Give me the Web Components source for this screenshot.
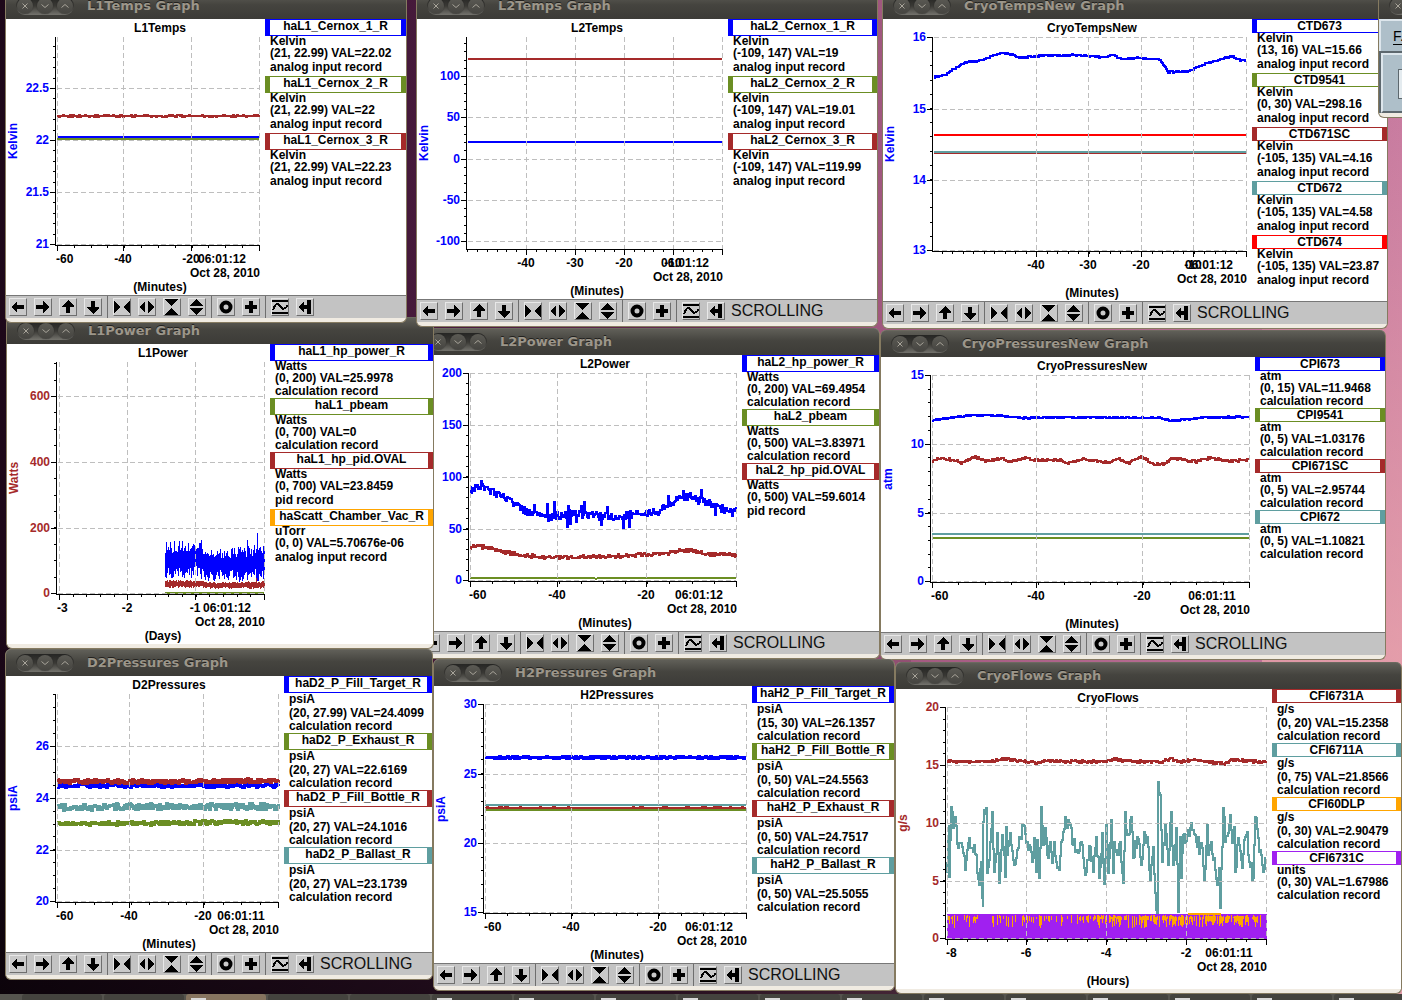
<!DOCTYPE html>
<html lang="en">
<head>
<meta charset="utf-8">
<title>StripTool graphs</title>
<style>
html, body { margin: 0; height: 100%; }
body { overflow: hidden; }
</style>
</head>
<body>
<control-desktop></control-desktop>
<script>
const COLORS = { blue: '#0000ff', green: '#6b8e23', brown: '#a52a2a', teal: '#5f9ea0', orange: '#ffa500', purple: '#a020f0', red: '#ff0000' };

/* Every window: place on the desktop, axes, traces and legend. Chart numbers are px inside the client area. */
const WINDOWS = [
  { name: 'L1Power', x: 7, y: 317, w: 426, h: 300, legendW: 163, bar: 0, unit: 'Watts', axis: 'brown', xTitle: '(Days)', time: '06:01:12',
    ys: [['600', 52], ['400', 118], ['200', 184], ['0', 249]], yDiv: 4, xs: [['-3', 52], ['-2', 120], ['-1', 188], ['', 257]], xDiv: 5,
    traces: [
      { c: 'green', w: 2, pts: [[158, 249], [257, 249]] },
      { c: 'blue', band: [[158, 203, 229], [190, 203, 228], [200, 210, 232], [225, 209, 232], [257, 206, 231]], amp: 12, spikes: [[250, 189], [240, 196], [194, 196], [175, 197]] },
      { c: 'brown', band: [[158, 237, 243], [195, 237, 243], [205, 239, 244], [257, 238, 244]], amp: 2, spikes: [[249, 234]] }],
    legend: [['haL1_hp_power_R', 'blue', 'Watts', '(0, 200) VAL=25.9978', 'calculation record'], ['haL1_pbeam', 'green', 'Watts', '(0, 700) VAL=0', 'calculation record'],
      ['haL1_hp_pid.OVAL', 'brown', 'Watts', '(0, 700) VAL=23.8459', 'pid record'], ['haScatt_Chamber_Vac_R', 'orange', 'uTorr', '(0, 0) VAL=5.70676e-06', 'analog input record']] },
  { name: 'L2Power', x: 419, y: 328, w: 460, h: 276, legendW: 137, bar: 1, unit: 'Watts', axis: 'blue', xTitle: '(Minutes)', time: '06:01:12',
    ys: [['200', 18], ['150', 70], ['100', 122], ['50', 174], ['0', 225]], yDiv: 5, xs: [['-60', 51], ['-40', 138], ['-20', 227], ['', 317]], xDiv: 4,
    traces: [
      { c: 'green', w: 2, pts: [[51, 223], [175, 223], [177, 224], [179, 223], [317, 223]] },
      { c: 'brown', w: 2, amp: 1.8, pts: [[51, 192], [66, 192], [84, 197], [104, 200], [128, 203], [198, 201], [244, 199], [258, 196], [271, 195], [288, 199], [317, 200]] },
      { c: 'blue', w: 2, amp: 4, spike: 13, pts: [[51, 135], [66, 132], [79, 140], [96, 148], [108, 158], [128, 162], [151, 159], [198, 162], [224, 158], [241, 156], [251, 148], [268, 141], [288, 147], [304, 154], [313, 158], [317, 152]] }],
    legend: [['haL2_hp_power_R', 'blue', 'Watts', '(0, 200) VAL=69.4954', 'calculation record'], ['haL2_pbeam', 'green', 'Watts', '(0, 500) VAL=3.83971', 'calculation record'],
      ['haL2_hp_pid.OVAL', 'brown', 'Watts', '(0, 500) VAL=59.6014', 'pid record']] },
  { name: 'CryoPressuresNew', x: 881, y: 330, w: 504, h: 275, legendW: 130, bar: 1, unit: 'atm', axis: 'blue', xTitle: '(Minutes)', time: '06:01:11',
    ys: [['15', 18], ['10', 87], ['5', 156], ['0', 224]], yDiv: 5, xs: [['-60', 51], ['-40', 155], ['-20', 261], ['', 368]], xDiv: 4,
    traces: [
      { c: 'green', w: 2, pts: [[51, 181], [368, 181]] },
      { c: 'teal', w: 2, pts: [[51, 177], [368, 177]] },
      { c: 'brown', w: 2, amp: 1.2, pts: [[51, 105], [56, 101], [73, 103], [80, 106], [94, 100], [105, 104], [121, 101], [128, 105], [141, 101], [155, 103], [179, 103], [187, 106], [202, 102], [226, 105], [239, 102], [247, 106], [260, 99], [271, 107], [283, 107], [291, 101], [315, 105], [327, 101], [349, 104], [368, 103]] },
      { c: 'blue', w: 2, amp: .7, pts: [[51, 63], [75, 60], [91, 58], [122, 59], [142, 61], [176, 60], [280, 61], [290, 64], [317, 61], [344, 60], [368, 60]] }],
    legend: [['CPI673', 'blue', 'atm', '(0, 15) VAL=11.9468', 'calculation record'], ['CPI9541', 'green', 'atm', '(0, 5) VAL=1.03176', 'calculation record'],
      ['CPI671SC', 'brown', 'atm', '(0, 5) VAL=2.95744', 'calculation record'], ['CPI672', 'teal', 'atm', '(0, 5) VAL=1.10821', 'calculation record']] },
  { name: 'L1Temps', x: 6, y: -8, w: 400, h: 276, legendW: 141, bar: 2, unit: 'Kelvin', axis: 'blue', xTitle: '(Minutes)', time: '06:01:12',
    ys: [['22.5', 69], ['22', 121], ['21.5', 173], ['21', 225]], yDiv: 5, xs: [['-60', 51], ['-40', 117], ['-20', 185], ['', 253]], xDiv: 4,
    traces: [
      { c: 'green', w: 2, amp: .5, pts: [[51, 120], [253, 120]] },
      { c: 'blue', w: 2, pts: [[51, 118], [253, 118]] },
      { c: 'brown', w: 2, amp: .8, pts: [[51, 97], [253, 97]] }],
    legend: [['haL1_Cernox_1_R', 'blue', 'Kelvin', '(21, 22.99) VAL=22.02', 'analog input record'], ['haL1_Cernox_2_R', 'green', 'Kelvin', '(21, 22.99) VAL=22', 'analog input record'],
      ['haL1_Cernox_3_R', 'brown', 'Kelvin', '(21, 22.99) VAL=22.23', 'analog input record']] },
  { name: 'L2Temps', x: 417, y: -8, w: 460, h: 280, legendW: 149, bar: 1, unit: 'Kelvin', axis: 'blue', xTitle: '(Minutes)', time: '06:01:12',
    ys: [['100', 57], ['50', 98], ['0', 140], ['-50', 181], ['-100', 222]], yDiv: 5, xs: [['-40', 109], ['-30', 158], ['-20', 207], ['-10', 256], ['', 305]], xDiv: 5,
    traces: [{ c: 'brown', w: 2, pts: [[51, 40], [305, 40]] }, { c: 'blue', w: 2, pts: [[51, 123], [305, 123]] }],
    legend: [['haL2_Cernox_1_R', 'blue', 'Kelvin', '(-109, 147) VAL=19', 'analog input record'], ['haL2_Cernox_2_R', 'green', 'Kelvin', '(-109, 147) VAL=19.01', 'analog input record'],
      ['haL2_Cernox_3_R', 'brown', 'Kelvin', '(-109, 147) VAL=119.99', 'analog input record']] },
  { name: 'CryoTempsNew', x: 883, y: -8, w: 504, h: 282, legendW: 135, bar: 1, unit: 'Kelvin', axis: 'blue', xTitle: '(Minutes)', time: '06:01:12',
    ys: [['16', 18], ['15', 90], ['14', 161], ['13', 231]], yDiv: 5, xs: [['-40', 153], ['-30', 205], ['-20', 258], ['-10', 310], ['', 363]], xDiv: 5,
    traces: [
      { c: 'brown', w: 2, pts: [[51, 134], [363, 134]] }, { c: 'teal', w: 2, pts: [[51, 133], [363, 133]] }, { c: 'red', w: 2, pts: [[51, 116], [363, 116]] },
      { c: 'blue', w: 2, amp: .8, pts: [[51, 58], [62, 56], [69, 51], [83, 43], [100, 41], [108, 37], [120, 34], [131, 36], [137, 39], [153, 37], [190, 36], [219, 38], [229, 36], [239, 40], [254, 39], [276, 40], [285, 53], [306, 52], [321, 45], [335, 41], [349, 37], [357, 41], [363, 42]] }],
    legend: [['CTD673', 'blue', 'Kelvin', '(13, 16) VAL=15.66', 'analog input record'], ['CTD9541', 'green', 'Kelvin', '(0, 30) VAL=298.16', 'analog input record'],
      ['CTD671SC', 'brown', 'Kelvin', '(-105, 135) VAL=4.16', 'analog input record'], ['CTD672', 'teal', 'Kelvin', '(-105, 135) VAL=4.58', 'analog input record'],
      ['CTD674', 'red', 'Kelvin', '(-105, 135) VAL=23.87', 'analog input record']] },
  { name: 'D2Pressures', x: 6, y: 649, w: 426, h: 276, legendW: 148, bar: 1, unit: 'psiA', axis: 'blue', xTitle: '(Minutes)', time: '06:01:11',
    ys: [['26', 70], ['24', 122], ['22', 174], ['20', 225]], yDiv: 4, xs: [['-60', 51], ['-40', 123], ['-20', 197], ['', 272]], xDiv: 4,
    traces: [
      { c: 'green', w: 3, amp: 1.7, pts: [[51, 147], [150, 147], [190, 146], [272, 146]] },
      { c: 'teal', w: 3, amp: 3, pts: [[51, 131], [150, 130], [272, 130]] },
      { c: 'blue', w: 3, amp: 1.9, pts: [[51, 109], [272, 109]] },
      { c: 'brown', w: 3, amp: 2, pts: [[51, 105], [150, 105], [272, 104]] }],
    legend: [['haD2_P_Fill_Target_R', 'blue', 'psiA', '(20, 27.99) VAL=24.4099', 'calculation record'], ['haD2_P_Exhaust_R', 'green', 'psiA', '(20, 27) VAL=22.6169', 'calculation record'],
      ['haD2_P_Fill_Bottle_R', 'brown', 'psiA', '(20, 27) VAL=24.1016', 'calculation record'], ['haD2_P_Ballast_R', 'teal', 'psiA', '(20, 27) VAL=23.1739', 'calculation record']] },
  { name: 'H2Pressures', x: 434, y: 659, w: 460, h: 277, legendW: 142, bar: 1, unit: 'psiA', axis: 'blue', xTitle: '(Minutes)', time: '06:01:12',
    ys: [['30', 18], ['25', 88], ['20', 157], ['15', 226]], yDiv: 5, xs: [['-60', 51], ['-40', 137], ['-20', 224], ['', 312]], xDiv: 4,
    traces: [
      { c: 'brown', w: 2, amp: .6, pts: [[51, 122], [312, 122]] }, { c: 'green', w: 2, pts: [[51, 124], [312, 124]] },
      { c: 'teal', w: 2, amp: .3, pts: [[51, 119], [312, 119]] }, { c: 'blue', w: 3, amp: .9, pts: [[51, 71], [312, 71]] }],
    legend: [['haH2_P_Fill_Target_R', 'blue', 'psiA', '(15, 30) VAL=26.1357', 'calculation record'], ['haH2_P_Fill_Bottle_R', 'green', 'psiA', '(0, 50) VAL=24.5563', 'calculation record'],
      ['haH2_P_Exhaust_R', 'brown', 'psiA', '(0, 50) VAL=24.7517', 'calculation record'], ['haH2_P_Ballast_R', 'teal', 'psiA', '(0, 50) VAL=25.5055', 'calculation record']] },
  { name: 'CryoFlows', x: 896, y: 662, w: 505, h: 300, legendW: 129, bar: 0, unit: 'g/s', axis: 'brown', xTitle: '(Hours)', time: '06:01:11',
    ys: [['20', 18], ['15', 76], ['10', 134], ['5', 192], ['0', 249]], yDiv: 5, xs: [['-8', 51], ['-6', 130], ['-4', 210], ['-2', 290], ['', 370]], xDiv: 4,
    traces: [
      { c: 'brown', w: 2, amp: 1.4, pts: [[51, 72], [75, 73], [95, 72], [105, 70], [115, 71], [140, 74], [150, 72], [210, 73], [218, 70], [230, 72], [265, 73], [275, 70], [285, 73], [297, 70], [305, 72], [328, 75], [335, 71], [370, 73]] },
      { c: 'teal', w: 2, amp: 8, scale: 3, pts: [[169, 650], [176, 510], [178, 665], [183, 457], [188, 520], [195, 487], [205, 580], [215, 575], [225, 645], [238, 550], [250, 590], [258, 600], [262, 655], [268, 690], [272, 620], [275, 730], [278, 757], [280, 500], [287, 460], [292, 655], [300, 560], [306, 470], [313, 650], [322, 535], [327, 685], [335, 540], [345, 665], [347, 517], [352, 600], [360, 535], [372, 630], [383, 580], [390, 545], [400, 510], [410, 560], [420, 575], [430, 610], [433, 550], [438, 650], [442, 555], [447, 668], [453, 457], [458, 570], [466, 520], [472, 600], [480, 560], [487, 625], [492, 560], [500, 640], [506, 645], [512, 560], [520, 530], [528, 500], [540, 510], [550, 570], [560, 585], [575, 570], [585, 660], [600, 575], [610, 650], [618, 545], [626, 670], [635, 535], [642, 688], [648, 510], [655, 655], [662, 495], [668, 655], [672, 560], [680, 600], [690, 560], [698, 683], [704, 470], [710, 540], [722, 487], [730, 610], [740, 545], [752, 630], [762, 530], [770, 545], [780, 675], [788, 575], [797, 765], [800, 775], [805, 380], [810, 420], [815, 620], [825, 510], [833, 630], [842, 470], [848, 630], [857, 520], [863, 770], [870, 545], [874, 670], [880, 540], [890, 540], [904, 505], [918, 560], [930, 575], [937, 580], [943, 675], [950, 510], [955, 600], [962, 560], [972, 610], [982, 690], [987, 640], [991, 760], [998, 460], [1005, 560], [1020, 480], [1026, 565], [1033, 515], [1035, 650], [1043, 550], [1055, 640], [1062, 555], [1070, 530], [1078, 620], [1088, 670], [1095, 487], [1103, 550], [1112, 600], [1120, 650], [1128, 610]] },
      { c: 'purple', band: [[51, 225, 250], [370, 225, 250]], amp: 0 },
      { c: 'orange', streaks: [[52, 62, .5], [68, 82, .6], [94, 130, .4], [130, 190, .45], [190, 262, .7], [262, 366, .75]], top: 226 },
      { c: 'orange', w: 2, pts: [[292, 225], [325, 225]] }],
    legend: [['CFI6731A', 'brown', 'g/s', '(0, 20) VAL=15.2358', 'calculation record'], ['CFI6711A', 'teal', 'g/s', '(0, 75) VAL=21.8566', 'calculation record'],
      ['CFI60DLP', 'orange', 'g/s', '(0, 30) VAL=2.90479', 'calculation record'], ['CFI6731C', 'purple', 'units', '(0, 30) VAL=1.67986', 'calculation record']] }
];

function define(name, html, setup) {
  const template = document.createElement('template');
  template.innerHTML = html;
  customElements.define(name, class extends HTMLElement {
    connectedCallback() {
      if (this.shadowRoot) return;
      this.attachShadow({ mode: 'open' }).append(template.content.cloneNode(true));
      if (setup) setup.call(this, this.shadowRoot);
    }
  });
}

function randomSource(seed) {
  return () => { seed = (seed * 1664525 + 1013904223) >>> 0; return seed / 4294967296; };
}

/* Path of one trace: vertical streaks, a filled noise band, or a stepped noisy line */
function tracePath(t, rnd) {
  const at = (pts, x, k = 1) => {
    let i = 1;
    while (i < pts.length - 1 && pts[i][0] < x) i++;
    const a = pts[i - 1], b = pts[i];
    return a[k] + (b[k] - a[k]) * (x - a[0]) / (b[0] - a[0]);
  };
  let d = '';
  if (t.streaks) {
    for (const [from, to, p] of t.streaks)
      for (let x = from; x < to; x++) if (rnd() < p) d += `M${x + .5} ${t.top + Math.round(rnd() * 2)}V${t.top + 3 + Math.round(rnd() * 10)}`;
    return d;
  }
  if (t.band) {
    const end = t.band[t.band.length - 1][0];
    for (let x = t.band[0][0]; x <= end; x++) {
      const s = (t.spikes || []).find(s => s[0] === x);
      const y1 = s ? s[1] : at(t.band, x, 1) - (rnd() - .5) * t.amp;
      d += `M${x + .5} ${Math.round(y1)}V${Math.round(at(t.band, x, 2) + (rnd() - .5) * t.amp)}`;
    }
    return d;
  }
  if (t.scale) {
    let [px, py] = [0, 0];
    t.pts.forEach(([zx, zy], i) => {
      const x = Math.round(zx / t.scale - 6), y = Math.round(zy / t.scale - 34);
      if (!i) d = `M${x} ${y}`;
      else {
        for (let sx = px + 1; sx < x; sx++) d += `H${sx}V${Math.round(py + (y - py) * (sx - px) / (x - px) + (rnd() - .5) * 2 * t.amp)}`;
        d += `H${x}V${y}`;
      }
      [px, py] = [x, y];
    });
    return d;
  }
  const pts = t.pts;
  if (!t.amp) return 'M' + pts.map(p => p.join(' ')).join('L');
  const start = pts[0][0], end = pts[pts.length - 1][0];
  for (let x = start; x <= end; x++) {
    let y = at(pts, x) + (rnd() - .5) * 2 * t.amp;
    if (t.spike && rnd() < .15) y += (rnd() < .55 ? -1 : 1) * t.spike * (.3 + rnd() * .7);
    y = Math.round(y);
    d += d ? `H${x}V${y}` : `M${x} ${y}`;
  }
  return d;
}

define('strip-chart', `<style>
:host { display: block; min-width: 0; }
svg { display: block; overflow: visible; }
text { font: bold 12px "Liberation Sans", Arial, sans-serif; }
.mid { text-anchor: middle; } .end { text-anchor: end; }
path { fill: none; shape-rendering: crispEdges; }
</style><svg></svg>`, function (root) {
  const c = this.config, svg = root.querySelector('svg');
  const W = c.w - c.legendW, H = c.h, L = 50, T = 18, B = H - 50, R = c.xs[c.xs.length - 1][1];
  const rnd = randomSource(c.name.length * 977 + c.h), color = COLORS[c.axis], mid = Math.round((L + R) / 2) + 2;
  let grid = '', tx = `M${L} ${B + .5}H${R + 1}`, ty = `M${L - .5} ${T}V${B + 1}`, out = '';
  for (const [, y] of c.ys) { grid += `M${L + 1} ${y + .5}H${R}`; ty += `M${L - 6} ${y + .5}H${L}`; }
  for (const [, x] of c.xs) { grid += `M${x + .5} ${T}V${B}`; tx += `M${x + .5} ${B}v6`; }
  const n = c.ys.length, dy = (c.ys[n - 1][1] - c.ys[0][1]) / (n - 1) / c.yDiv;
  for (let y = c.ys[0][1]; y > T; y -= dy) ty += `M${L - 3} ${Math.round(y) + .5}H${L}`;
  for (let y = c.ys[0][1]; y < B; y += dy) ty += `M${L - 3} ${Math.round(y) + .5}H${L}`;
  const m = c.xs.length, dx = (R - c.xs[0][1]) / (m - 1) / c.xDiv;
  for (let x = R; x > L; x -= dx) tx += `M${Math.round(x) + .5} ${B}v3`;
  for (const t of c.traces) out += `<path d="${tracePath(t, rnd)}" stroke="${COLORS[t.c]}" stroke-width="${t.w || 1}"/>`;
  out += `<path d="${grid}" stroke="#bebebe" stroke-dasharray="5 3"/><path d="${tx}${ty}" stroke="#000"/>`;
  out += `<text class="mid" x="${mid}" y="13">${c.name}</text><text class="mid" x="${mid}" y="${H - 4}">${c.xTitle}</text>`;
  for (const [s, y] of c.ys) out += `<text class="end" x="43" y="${y + 4}" fill="${color}">${s}</text>`;
  for (const [s, x] of c.xs) if (s) out += x < 60 ? `<text x="${L}" y="${H - 32}">${s}</text>` : `<text class="mid" x="${x}" y="${H - 32}">${s}</text>`;
  out += `<text class="mid" x="${R - 37}" y="${H - 32}">${c.time}</text><text class="end" x="${R + 1}" y="${H - 18}">Oct 28, 2010</text>`;
  const cy = Math.round((T + B) / 2);
  out += `<text class="mid" x="11" y="${cy}" transform="rotate(-90 11 ${cy})" fill="${color}">${c.unit}</text>`;
  svg.setAttribute('width', W); svg.setAttribute('height', H);
  svg.innerHTML = out;
});

/* legend-entry: coloured name box over three short lines */
define('legend-entry', `<style>
:host { display: block; white-space: nowrap; font: bold 12px/12px "Liberation Sans", Arial, sans-serif; color: #000; margin-bottom: 1px; }
.name { box-sizing: border-box; height: 14px; border: solid var(--c); border-width: 1px 5px; display: flex; justify-content: center; }
.name.deep { height: 17px; }
.line { height: 11px; padding-left: 5px; line-height: 10px; }
.line.deep { height: 14px; line-height: 12px; }
</style><div class="name"></div><div class="line"></div><div class="line"></div><div class="line"></div>`, function (root) {
  const [name, color, ...lines] = this.config;
  this.style.setProperty('--c', COLORS[color]);
  [name, ...lines].forEach((s, i) => {
    const el = root.children[i + 1];
    el.textContent = s;
    el.classList.toggle('deep', /[_gpy(/]/.test(s));
  });
});

/* tool-bar */
const ICONS = [[
  ['Pan left', '<path d="M2 9 8 3v4h7v4H8v4z"/>'],
  ['Pan right', '<path d="M15 9 9 3v4H2v4h7v4z"/>'],
  ['Pan up', '<path d="M9 2 3 8v1h4v6h4V9h4V8z"/>'],
  ['Pan down', '<path d="M9 16 3 10V9h4V3h4v6h4v1z"/>']], [
  ['Zoom out x', '<path d="M1 3v12l7-6zM17 3v12l-7-6z"/>'],
  ['Zoom in x', '<path d="M7 3v12L1 9zM10 3v12l6-6z"/>'],
  ['Zoom out y', '<path d="M2 1h13L8.500 8zM2 17h13L8.500 10z"/>'],
  ['Zoom in y', '<path d="M2 8h13L8.500 1zM2 10h13l-6.500 7z"/>']], [
  ['Auto scale', '<circle cx="9" cy="9" r="4.500" fill="none" stroke="#000" stroke-width="4" shape-rendering="geometricPrecision"/>'],
  ['Refresh', '<path d="M7 3h4v4h4v4h-4v4H7v-4H3V7h4z"/>']], [
  ['Reset', '<path d="M1 2h16v2H1zM1 14h16v2H1z"/><path d="M2 12C5 4 7 5 9 8s4 5 8-1" fill="none" stroke="#000" stroke-width="2"/>'],
  ['Scroll', '<path d="M2 9l6-6v4h3V2h4v14h-4v-5H8v4z"/>']]];
define('tool-bar', `<style>
:host { box-sizing: border-box; display: flex; align-items: center; height: 23px; padding: 0 3px; background: #c3c3c3; border-top: 1px solid #777; }
.group { display: flex; gap: 7px; }
.group + .group { margin-left: 5px; padding-left: 5px; border-left: 1px solid #6e6e6e; height: 22px; align-items: center; }
button { width: 18px; height: 18px; padding: 0; border: 1px solid; border-color: #e8e8e8 #6e6e6e #6e6e6e #e8e8e8; background: #c9c9c9; }
svg { display: block; width: 16px; height: 16px; shape-rendering: crispEdges; }
output { margin-left: 6px; font: 16px/20px "Liberation Sans", Arial, sans-serif; color: #111; }
</style><output>SCROLLING</output>`, function (root) {
  const out = root.querySelector('output');
  for (const g of ICONS) {
    const div = document.createElement('div');
    div.className = 'group';
    div.innerHTML = g.map(([label, s]) => `<button type="button" aria-label="${label}"><svg viewBox="1 1 16 16">${s}</svg></button>`).join('');
    out.before(div);
  }
  if (this.hasAttribute('quiet')) out.remove();
});

/* title-bar */
define('title-bar', `<style>
:host { box-sizing: border-box; display: flex; align-items: center; height: 27px; padding-left: 10px; gap: 13px; border-radius: 5px 5px 0 0; background: linear-gradient(#605f58, #45443f 45%, #3c3b37); border-top: 1px solid #6b695f; overflow: hidden; }
.pill { flex: none; display: flex; gap: 4px; padding: 1px; border-radius: 9px; background: linear-gradient(#262624, #3a3935 50%, #74736d); }
button { width: 16px; height: 16px; padding: 0; border: 0; border-radius: 8px; background: linear-gradient(#5b5a54, #454440); box-shadow: 0 0 1px #222; }
svg { display: block; fill: none; stroke: #a8a49a; }
h2 { margin: 0; font: bold 13px/18px "DejaVu Sans", sans-serif; color: #9c968a; text-shadow: 0 -1px #22211e; white-space: nowrap; }
</style><div class="pill">
<button type="button" aria-label="Close"><svg viewBox="0 0 16 16"><path d="M5.500 5.500l5 5M10.500 5.500l-5 5"/></svg></button>
<button type="button" aria-label="Minimize"><svg viewBox="0 0 16 16"><path d="M4.500 6.500 8 9.500l3.500-3"/></svg></button>
<button type="button" aria-label="Maximize"><svg viewBox="0 0 16 16"><path d="M4.500 9.500 8 6.500l3.500 3"/></svg></button>
</div><h2><slot></slot></h2>`);

/* app-window: frame with title, chart, legend and toolbar slots */
define('app-window', `<style>
:host { display: block; position: absolute; border: solid #857a60; border-width: 0 1px 1px; border-radius: 6px; background: #f0ebe2; padding-bottom: 4px; }
.client { display: grid; grid-template-columns: minmax(0, 1fr) auto; background: #fff; overflow: hidden; }
</style><slot name="title"></slot><div class="client"><slot></slot></div><slot name="tools"></slot>`);

define('graph-legend', `<style>:host { display: block; min-width: 0; }</style><slot></slot>`);

/* menu-panel: the corner of a second application */
define('menu-panel', `<style>
:host { display: block; background: #aebfc9; }
nav { box-sizing: border-box; height: 32px; padding: 6px 0 0 12px; border: 2px solid #dde6ec; border-bottom: 0; background: #aebfc9; overflow: hidden; }
a { font: 14px/14px "Liberation Sans", Arial, sans-serif; color: #000; text-underline-offset: 3px; }
.body { box-sizing: border-box; height: 60px; padding: 14px 0 0 15px; border: 2px solid #dde6ec; border-bottom-color: #5d686e; }
.hold { border: solid #5d686e; border-width: 2px 0 0 2px; }
.box { height: 28px; border: 1px solid #5d686e; background: #e4ebef; }
</style><nav><a href="#">F.</a></nav><div class="hold"><div class="body"><div class="box"></div></div></div>`);

/* task-strip: top edge of the panel */
define('task-strip', `<style>
:host { display: flex; gap: 2px; position: absolute; left: 0; right: 0; bottom: 0; height: 6px; padding-left: 22px; background: #55544e; overflow: hidden; }
button { flex: none; width: 80px; padding: 0 0 0 5px; border: 0; border-radius: 3px 3px 0 0; background: #44433e; display: flex; align-items: end; }
button.on { background: #86745f; }
i { width: 15px; height: 2px; background: #d8d8d8; }
</style>`, function (root) {
  for (let n = 0; n < 17; n++) {
    const b = document.createElement('button');
    b.type = 'button';
    b.setAttribute('aria-label', 'Task ' + (n + 1));
    if (n === 2) b.className = 'on';
    if (n === 2 || n > 4) b.append(document.createElement('i'));
    root.append(b);
  }
});

define('control-desktop', `<style>
:host { display: block; position: relative; height: 100vh; overflow: hidden;
  background: linear-gradient(transparent 60%, rgba(0,0,0,.35) 80%, rgba(0,0,0,.6)) left / 65% 100% no-repeat, linear-gradient(transparent 10%, rgba(255,190,180,.5) 65%) right / 10% 100% no-repeat, linear-gradient(90deg, #1d0819, #45193a 29%, #682c52 50%, #a1587f 63%, #c87ba0 100%); }
</style>`, function (root) {
  const make = (tag, props = {}, ...kids) => { const e = Object.assign(document.createElement(tag), props); e.append(...kids); return e; };
  const place = (win, x, y, w) => { win.style.left = x - 1 + 'px'; win.style.top = y + 'px'; win.style.width = w + 'px'; return win; };
  const build = c => {
    const legend = make('graph-legend', {}, ...c.legend.map(l => make('legend-entry', { config: l })));
    legend.style.width = c.legendW + 'px';
    const win = make('app-window', {}, make('title-bar', { slot: 'title' }, c.name + ' Graph'), make('strip-chart', { config: c }), legend);
    if (c.bar) {
      const bar = make('tool-bar', { slot: 'tools' });
      if (c.bar === 2) bar.setAttribute('quiet', '');
      win.append(bar);
    }
    return place(win, c.x, c.y, c.w);
  };
  const [l1Power, l2Power, ...rest] = WINDOWS;
  root.append(build(l2Power), build(l1Power), ...rest.map(build));
  const side = place(make('app-window', {}, make('title-bar', { slot: 'title' }), make('menu-panel', { slot: 'tools' })), 1379, -8, 120);
  root.append(side, make('task-strip'));
});
</script>
</body>
</html>
